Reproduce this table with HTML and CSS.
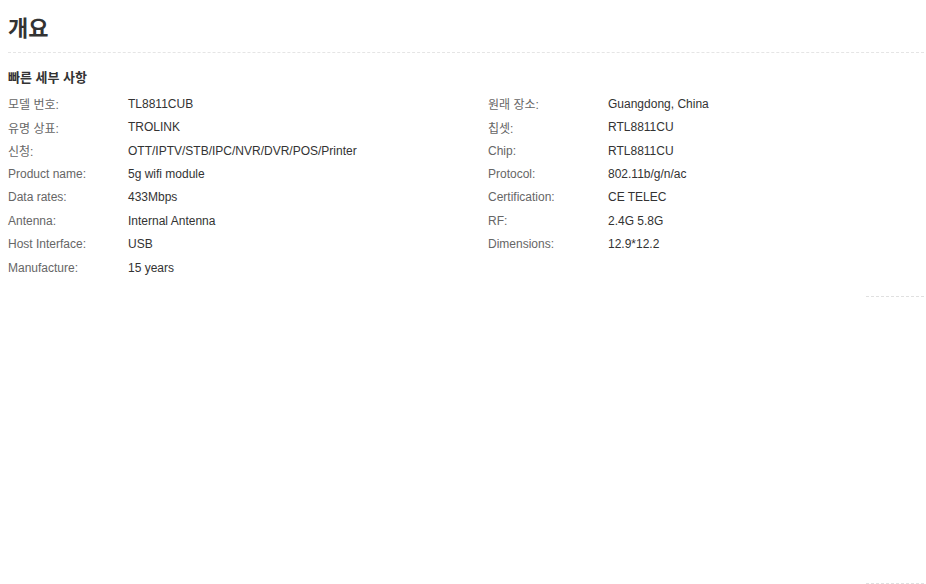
FILE: index.html
```html
<!DOCTYPE html>
<html lang="ko">
<head>
<meta charset="utf-8">
<link rel="stylesheet" href="styles.css">
</head>
<body>
<div class="page">
  <h1 class="title">개요</h1>
  <h2 class="section">빠른 세부 사항</h2>
  <div class="attrs">
    <div class="col">
      <div class="row"><span class="label">모델 번호:</span><span class="value">TL8811CUB</span></div>
      <div class="row"><span class="label">유명 상표:</span><span class="value">TROLINK</span></div>
      <div class="row"><span class="label">신청:</span><span class="value">OTT/IPTV/STB/IPC/NVR/DVR/POS/Printer</span></div>
      <div class="row"><span class="label">Product name:</span><span class="value">5g wifi module</span></div>
      <div class="row"><span class="label">Data rates:</span><span class="value">433Mbps</span></div>
      <div class="row"><span class="label">Antenna:</span><span class="value">Internal Antenna</span></div>
      <div class="row"><span class="label">Host Interface:</span><span class="value">USB</span></div>
      <div class="row"><span class="label">Manufacture:</span><span class="value">15 years</span></div>
    </div>
    <div class="col">
      <div class="row"><span class="label">원래 장소:</span><span class="value">Guangdong, China</span></div>
      <div class="row"><span class="label">칩셋:</span><span class="value">RTL8811CU</span></div>
      <div class="row"><span class="label">Chip:</span><span class="value">RTL8811CU</span></div>
      <div class="row"><span class="label">Protocol:</span><span class="value">802.11b/g/n/ac</span></div>
      <div class="row"><span class="label">Certification:</span><span class="value">CE TELEC</span></div>
      <div class="row"><span class="label">RF:</span><span class="value">2.4G 5.8G</span></div>
      <div class="row"><span class="label">Dimensions:</span><span class="value">12.9*12.2</span></div>
    </div>
  </div>
  <div class="divider-short first"></div>
  <div class="spacer"></div>
  <div class="divider-short"></div>
</div>
</body>
</html>
```

FILE: styles.css
```css
html, body {
  margin: 0;
  padding: 0;
  background: #fff;
}
body {
  font-family: "Liberation Sans", Arial, "Noto Sans CJK KR", sans-serif;
  color: #333;
}
.page {
  padding: 0 2px 0 8px;
  display: flex;
  flex-direction: column;
}
.title {
  margin: 0;
  padding-top: 16px;
  height: 36px;
  font-size: 22px;
  line-height: 26px;
  font-weight: bold;
  color: #333;
  border-bottom: 1px dashed #e5e5e5;
}
.section {
  margin: 0;
  padding-top: 16px;
  font-size: 13px;
  line-height: 18px;
  font-weight: bold;
  color: #333;
}
.attrs {
  display: flex;
  padding-top: 5px;
}
.col {
  width: 480px;
  flex-shrink: 0;
  display: flex;
  flex-direction: column;
}
.row {
  display: flex;
  height: 23.45px;
  align-items: center;
  font-size: 12px;
}
.label {
  width: 120px;
  color: #666;
}
.value {
  color: #333;
}
.divider-short {
  align-self: flex-end;
  width: 58px;
  border-top: 1px dashed #e0e0e0;
}
.divider-short.first {
  margin-top: 16px;
}
.spacer {
  height: 286px;
}
```
